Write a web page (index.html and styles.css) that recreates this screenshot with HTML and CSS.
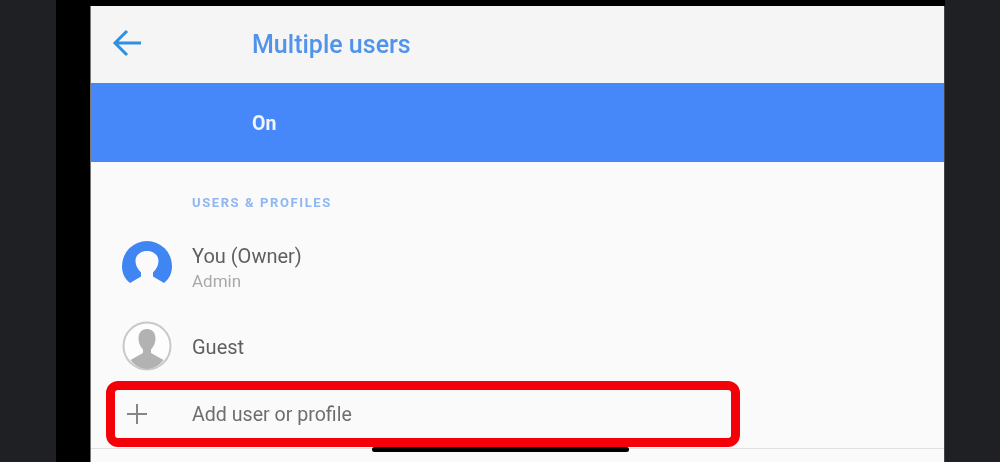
FILE: index.html
```html
<!DOCTYPE html>
<html lang="en">

<head>
  <meta charset="UTF-8">
  <meta name="viewport" content="width=device-width, initial-scale=1.0">
  <title>Multiple users</title>
  <link rel="stylesheet" href="styles.css">
</head>

<body>
  <div class="side side-left"></div>
  <div class="bezel"></div>

  <div class="screen">
    <!-- Toolbar -->
    <div class="toolbar">
      <svg class="back-icon" width="32" height="32" viewBox="0 0 32 32">
        <path d="M30 16H5M16 4L4 16L16 28" fill="none" stroke="#2f8fe0" stroke-width="3" />
      </svg>
      <h1>Multiple users</h1>
    </div>

    <div class="status-band">On</div>

    <div class="section-label">USERS &amp; PROFILES</div>

    <!-- User rows -->
    <div class="user-row owner-row">
      <svg class="avatar" width="52" height="52" viewBox="0 0 52 52">
        <path d="M26 1A25 25 0 0 0 1 26C1 33 3.500 38.500 9 43L20 36.500V32.500C16.500 29 14.500 25 14.500 21C14.500 15 19.500 11 26 11S37.500 15 37.500 21C37.500 25 35.500 29 32 32.500V36.500L43 43C48.500 38.500 51 33 51 26A25 25 0 0 0 26 1Z" fill="#3f86f2" />
      </svg>
      <div class="user-text">
        <div class="user-name">You (Owner)</div>
        <div class="user-role">Admin</div>
      </div>
    </div>

    <div class="user-row guest-row">
      <svg class="avatar" width="52" height="52" viewBox="0 0 52 52">
        <circle cx="26" cy="26" r="23.500" fill="#fdfdfd" stroke="#c9c9c9" stroke-width="2" />
        <path d="M26 9C20.500 9 17.500 13 17.500 18.500C17.500 23 19.500 27 22 29.500V33L9.500 40C13.500 45.500 19.500 49 26 49S38.500 45.500 42.500 40L30 33V29.500C32.500 27 34.500 23 34.500 18.500C34.500 13 31.500 9 26 9Z" fill="#b2b2b2" />
      </svg>
      <div class="user-name">Guest</div>
    </div>

    <div class="add-row">
      <svg class="add-icon" width="20" height="20" viewBox="0 0 20 20">
        <path d="M10 0V20M0 10H20" fill="none" stroke="#858585" stroke-width="2" />
      </svg>
      <div class="add-label">Add user or profile</div>
    </div>
  </div>

  <div class="side side-right"></div>

  <!-- Annotation and home bar, lying over the page -->
  <div class="highlight"></div>
  <div class="home-bar"></div>
</body>

</html>
```

FILE: styles.css
```css
* {
  margin: 0;
  padding: 0;
  box-sizing: border-box;
  font-family: Roboto, 'Liberation Sans', sans-serif;
}

html,
body {
  height: 100%;
  overflow: hidden;
}

body {
  display: flex;
  background-color: #000;
}

.side {
  background-color: #1f2024;
}

.side-left {
  width: 56px;
}

.side-right {
  width: 55px;
}

.bezel {
  width: 34px;
}

.screen {
  flex: 1;
  margin-top: 6px;
  background-color: #fafafa;
  border-left: 1px solid #777;
  border-right: 1px solid #444;
  filter: blur(0.6px);
}

.toolbar {
  display: flex;
  align-items: center;
  height: 77px;
  background-color: #f5f5f5;
  padding: 0 0 3px 20px;
}

.back-icon {
  margin-right: 109px;
}

.toolbar h1 {
  padding-top: 2px;
  font-size: 25px;
  font-weight: 500;
  color: #5193ea;
}

.status-band {
  display: flex;
  align-items: center;
  height: 79px;
  padding: 2px 0 0 161px;
  background-color: #4688fa;
  color: #f4f4f4;
  font-size: 19.500px;
  font-weight: 700;
}

.section-label {
  padding: 33px 0 0 101px;
  height: 70px;
  font-size: 13px;
  font-weight: 700;
  letter-spacing: 1.600px;
  color: #8fb6ee;
}

.user-row {
  display: flex;
  align-items: center;
  padding-left: 30px;
}

.owner-row {
  height: 68px;
  margin-bottom: 12px;
}

.guest-row {
  height: 68px;
}

.avatar {
  flex: none;
  margin-right: 19px;
}

.user-name {
  padding-top: 2px;
  font-size: 20px;
  color: #5f5f5f;
}

.user-role {
  margin-top: 3px;
  font-size: 17px;
  color: #a9a9a9;
}

.add-row {
  display: flex;
  align-items: center;
  height: 69px;
  padding-left: 36px;
  border-bottom: 1px solid #e0e0e0;
}

.add-icon {
  margin-right: 45px;
}

.add-label {
  font-size: 19.600px;
  color: #6e6e6e;
}

.highlight {
  position: absolute;
  left: 106px;
  top: 381px;
  width: 634px;
  height: 66px;
  border: 9px solid #f40008;
  border-radius: 12px;
}

.home-bar {
  position: absolute;
  left: 372px;
  top: 447px;
  width: 257px;
  height: 5px;
  border-radius: 3px;
  background-color: #000;
}
```
